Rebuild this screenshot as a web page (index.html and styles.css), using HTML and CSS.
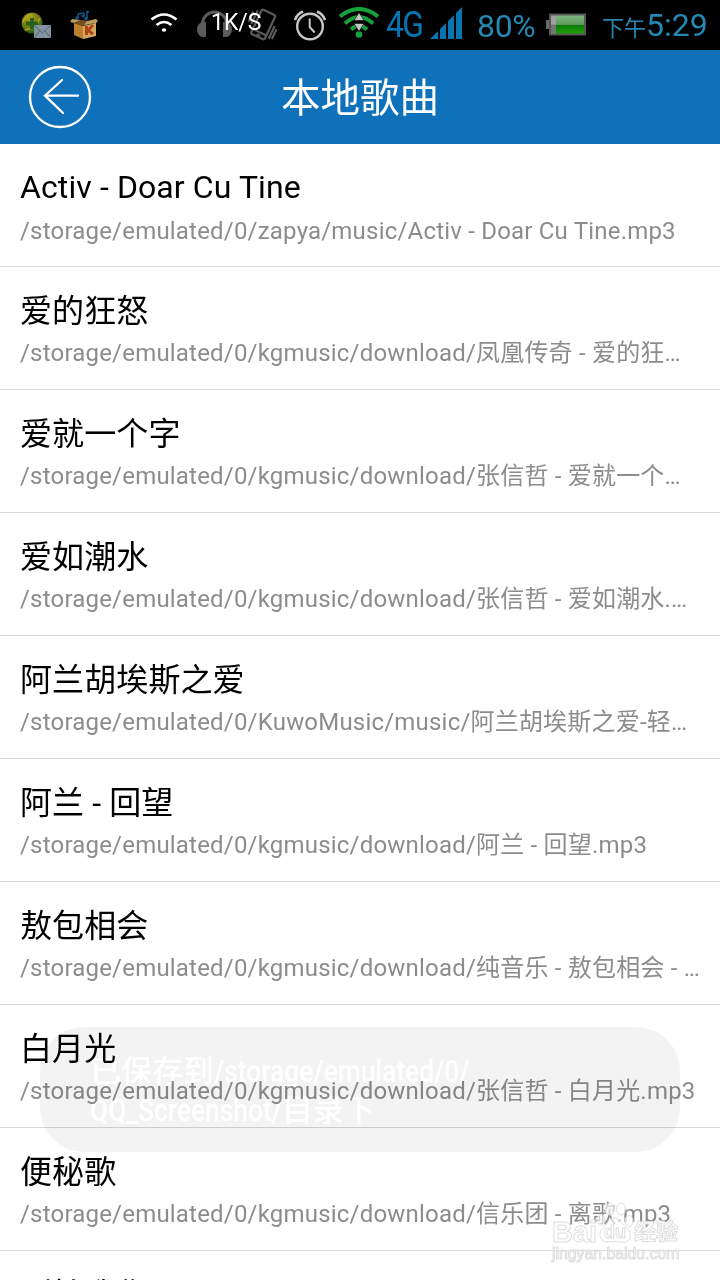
FILE: index.html
```html
<!DOCTYPE html>
<html lang="zh-CN">
<head>
  <meta charset="UTF-8" />
  <meta name="viewport" content="width=device-width, initial-scale=1" />
  <title>本地歌曲</title>
  <link rel="stylesheet" href="styles.css">
</head>
<body>
  <div class="status-bar">
    <svg class="icon-mail" width="32" height="28" viewBox="0 0 32 28">
      <defs>
        <radialGradient id="ball" cx="0.4" cy="0.3" r="0.7">
          <stop offset="0" stop-color="#b3a51c" />
          <stop offset="0.55" stop-color="#777f12" />
          <stop offset="1" stop-color="#245c12" />
        </radialGradient>
      </defs>
      <circle cx="11" cy="11" r="10.500" fill="url(#ball)" />
      <path d="M2 10c2-5 5-7 9-8M4 18c6-1 12-5 15-12" stroke="#b9a91e" stroke-width="1.500" fill="none" />
      <path d="M9 6h4v3.500h4v4h-4V17H9v-3.500H5v-4h4z" fill="#286117" />
      <path d="M13 13h17v13H13z" fill="#8493a0" />
      <path d="M13 13l8.500 8 8.500-8M13 26l6-7M30 26l-6-7" fill="none" stroke="#52606c" stroke-width="1" />
    </svg>
    <svg class="icon-box" width="30" height="30" viewBox="0 0 30 30">
      <path d="M4 13l9 3v13l-9-4z" fill="#bd812e" />
      <path d="M13 16l13-3v13l-13 3z" fill="#cfa866" />
      <path d="M4 13l8-3 14 2-13 4z" fill="#765020" />
      <path d="M4 13l-4-1 2-3 9 1zM26 13l2-2-2-2-9 2-3 4z" fill="#b99b5c" />
      <path d="M16.500 16v9M23 15l-5 5.500 5 3.500" stroke="#b34216" stroke-width="3" fill="none" />
      <path d="M8 8V4l6-1M14 3v3M17 1v7M17 1l2 1" stroke="#125784" stroke-width="1.500" fill="none" />
      <circle cx="7" cy="8" r="1.800" fill="#125784" /><circle cx="13" cy="6" r="1.600" fill="#125784" /><circle cx="16" cy="8.500" r="1.800" fill="#125784" />
    </svg>
    <svg class="icon-wifi" width="28" height="20" viewBox="0 0 28 20">
      <path d="M1.500 6.500Q14-3.500 26.500 6.500M6.500 12Q14 6 21.500 12" fill="none" stroke="#fff" stroke-width="2.600" />
      <ellipse cx="14" cy="17" rx="2.300" ry="1.800" fill="#fff" />
    </svg>
    <div class="speed">
      <svg width="80" height="34" viewBox="0 0 80 34">
        <path d="M5.500 19v-3a12 12 0 0 1 24 0v3" fill="none" stroke="#5b5b5b" stroke-width="3" />
        <path d="M9 14v15H6a6 7.500 0 0 1 0-15zM26 14v15h3a6 7.500 0 0 0 0-15z" fill="#5b5b5b" />
        <g transform="rotate(25 66 17)" fill="none" stroke="#5b5b5b" stroke-width="2.200">
          <rect x="58.500" y="3" width="15" height="27" rx="2" />
          <path d="M59 25h14M64 28h4M55 6v15M51.500 9v11M77 13v14M80 15v11" />
        </g>
      </svg>
      <span class="speed-text">1K/S</span>
    </div>
    <svg class="icon-alarm" width="32" height="32" viewBox="0 0 32 32">
      <g fill="none" stroke="#c7c7c7">
        <circle cx="16" cy="17.500" r="12.800" stroke-width="2.400" />
        <path d="M15.700 9.500V18l5 5.500" stroke-width="2" />
        <path d="M1 11Q3 5 9 2.500M31 11Q29 5 23 2.500" stroke-width="2.600" />
      </g>
    </svg>
    <svg class="icon-hotspot" width="42" height="32" viewBox="0 0 42 32">
      <g fill="none" stroke="#16a23b" stroke-width="4">
        <path d="M2 9.500Q21-5.500 40 9.500M7 16.500Q21 3.500 35 16.500M13 22.500Q21 15 29 22.500" />
      </g>
      <circle cx="21" cy="27.500" r="3.300" fill="#16a23b" />
      <path d="M16 13.500l5-8 5 8zM16 16.500h10l-5 8z" fill="#c3c3c3" stroke="#000" stroke-width="0.600" />
    </svg>
    <span class="network">4G</span>
    <svg class="icon-signal" width="33" height="32" viewBox="0 0 33 32">
      <path d="M0 32l8-8v8zM10 22l6-6v16h-6zM18 14l6-6v24h-6zM26 6l6-6v32h-6z" fill="#0675b2" />
    </svg>
    <span class="percent">80%</span>
    <svg class="icon-battery" width="40" height="23" viewBox="0 0 40 23">
      <defs>
        <linearGradient id="charge" x1="0" y1="0" x2="0" y2="1">
          <stop offset="0" stop-color="#80b884" />
          <stop offset="0.500" stop-color="#5a9a5a" />
          <stop offset="0.510" stop-color="#087708" />
          <stop offset="1" stop-color="#229f08" />
        </linearGradient>
      </defs>
      <path d="M0 7h4v9H0z" fill="#686868" />
      <path d="M3 .5h37v22H3z" fill="#565656" />
      <path d="M5 2.500h5v18H5z" fill="#a0a0a0" />
      <path d="M5 11.500h5v9H5z" fill="#777" />
      <path d="M10 2.500h28v18H10z" fill="url(#charge)" />
    </svg>
    <span class="clock"><small>下午</small>5:29</span>
  </div>

  <header class="header">
    <button class="back-btn" title="返回">
      <svg width="64" height="64" viewBox="0 0 64 64">
        <g fill="none" stroke="#fff" stroke-width="2.300">
          <circle cx="32" cy="32" r="30" />
          <path d="M50 30.700H17M34 15L17 30.700 35 48" stroke-linecap="round" />
        </g>
      </svg>
    </button>
    <h1>本地歌曲</h1>
  </header>

  <div class="song-list" id="songList">
    <!-- Rows inserted here -->
  </div>

  <div class="toast">
    <p>已保存到<span class="narrow">/storage/emulated/0/</span></p>
    <p><span class="narrow name">QQ_Screenshot/</span>目录下</p>
  </div>

  <div class="watermark">
    <div class="brand">
      <span class="bai">Bai</span>
      <span class="paw">
        <svg width="38" height="42" viewBox="0 0 38 42">
          <g fill="#fff" fill-opacity="0.6" stroke="#dedede" stroke-width="1">
            <ellipse cx="5" cy="18" rx="4" ry="5.500" />
            <ellipse cx="14" cy="7" rx="4.500" ry="6" />
            <ellipse cx="25" cy="7" rx="4.500" ry="6" />
            <ellipse cx="33" cy="19" rx="4" ry="5.500" />
            <path d="M18 16c-5 0-6 6-11 10-5 4-4 14 4 14 4 0 10-1 14 0 9 2 12-8 7-13-5-4-8-11-14-11z" />
          </g>
        </svg>
        <span class="du">du</span>
      </span>
      <span class="jingyan">经验</span>
    </div>
    <div class="site">jingyan.baidu.com</div>
  </div>

  <script src="script.js"></script>
</body>
</html>
```

FILE: styles.css
```css
html, body {
  margin: 0; padding: 0; height: 100%; overflow: hidden;
  font-family: Roboto, "Noto Sans CJK SC", sans-serif;
  background: #fff; color: #000;
}
body { position: relative; display: flex; flex-direction: column; }
svg { display: block; flex: none; }

/* Status bar */
.status-bar {
  display: flex; align-items: flex-start; flex: none;
  height: 50px; background: #000; overflow: hidden;
  white-space: nowrap;
}
.icon-mail { margin: 12px 0 0 21px; }
.icon-box { margin: 10px 0 0 17px; }
.icon-wifi { margin: 13px 0 0 50px; }
.speed { position: relative; margin: 8px 0 0 19px; width: 80px; }
.speed-text {
  position: absolute; left: 14px; top: 1px;
  font-size: 23px; line-height: 28px; color: #fff;
}
.icon-alarm { margin: 9px 0 0 17px; }
.icon-hotspot { margin: 7px 0 0 12px; }
.network {
  width: 37px; margin: 3px 0 0 6px;
  font-size: 37px; line-height: 44px; color: #0675b2; letter-spacing: -2px;
  transform: scaleX(0.86); transform-origin: left;
}
.icon-signal { margin: 7px 0 0 7px; }
.percent {
  width: 60px; margin: 5px 0 0 14px;
  font-size: 32px; line-height: 42px; color: #2588b3;
  letter-spacing: -0.3px;
}
.icon-battery { margin: 13px 0 0 9px; }
.clock {
  margin: 5px 0 0 16px;
  font-size: 32px; line-height: 40px; color: #2588b3;
}
.clock small { font-size: 22px; }

/* Title bar */
.header {
  display: grid; grid-template-columns: 120px 1fr 120px; align-items: center;
  flex: none; height: 94px; background: #0e71ba; color: #fff;
}
.back-btn {
  width: 64px; height: 64px; margin-left: 28px; padding: 0;
  background: none; border: none; cursor: pointer;
}
.header h1 {
  margin: 0; padding-top: 4px; text-align: center;
  font-size: 39.500px; font-weight: 400; line-height: 60px;
}

/* Songs */
.song-list { flex: 1; min-height: 0; overflow: hidden; }
.song {
  box-sizing: border-box; height: 123px; padding: 23px 20px 0;
  border-bottom: 1px solid #d9d9d9;
}
.song h2 {
  margin: 0; font-size: 32px; font-weight: 400; line-height: 42px;
  letter-spacing: 0.1px; white-space: nowrap;
}
.song p {
  margin: 3px 0 0; font-size: 24px; line-height: 36px; color: #8c8c8c;
  letter-spacing: 0.2px; white-space: nowrap;
}
.song:first-child { padding-top: 22px; }
.song:first-child p { margin-top: 5px; }

/* Toast, half faded out */
.toast {
  position: absolute; left: 40px; top: 1027px;
  box-sizing: border-box; width: 640px; height: 125px;
  padding: 25px 50px; border-radius: 44px;
  background: #f3f3f3; mix-blend-mode: multiply;
}
.toast p {
  margin: 0; font-size: 31px; line-height: 39px; color: #fff;
  font-weight: 500; white-space: nowrap;
}
.narrow {
  display: inline-block; width: 260px;
  transform: scaleX(0.85); transform-origin: left;
}
.narrow.name { width: 192px; }

.watermark {
  position: absolute; left: 552px; top: 1202px; width: 130px;
  font-family: "Liberation Sans", "Noto Sans CJK SC", sans-serif;
  color: #fff; -webkit-text-stroke: 1px #dedede;
}
.brand { display: flex; height: 43px; align-items: flex-end; font-weight: 700; }
.bai { width: 44px; font-size: 29px; line-height: 26px; }
.paw { position: relative; width: 38px; height: 43px; }
.du {
  position: absolute; left: 8px; top: 20px;
  font-size: 18px; line-height: 20px;
}
.jingyan { font-size: 22px; line-height: 26px; }
.site { font-size: 15.800px; line-height: 18px; }
```

FILE: script.js
```js
const songList = document.getElementById('songList');

const songs = [
  { title: 'Activ - Doar Cu Tine', path: '/storage/emulated/0/zapya/music/Activ - Doar Cu Tine.mp3' },
  { title: '爱的狂怒', path: '/storage/emulated/0/kgmusic/download/凤凰传奇 - 爱的狂…' },
  { title: '爱就一个字', path: '/storage/emulated/0/kgmusic/download/张信哲 - 爱就一个…' },
  { title: '爱如潮水', path: '/storage/emulated/0/kgmusic/download/张信哲 - 爱如潮水.…' },
  { title: '阿兰胡埃斯之爱', path: '/storage/emulated/0/KuwoMusic/music/阿兰胡埃斯之爱-轻…' },
  { title: '阿兰 - 回望', path: '/storage/emulated/0/kgmusic/download/阿兰 - 回望.mp3' },
  { title: '敖包相会', path: '/storage/emulated/0/kgmusic/download/纯音乐 - 敖包相会 - …' },
  { title: '白月光', path: '/storage/emulated/0/kgmusic/download/张信哲 - 白月光.mp3' },
  { title: '便秘歌', path: '/storage/emulated/0/kgmusic/download/信乐团 - 离歌.mp3' },
  { title: '别怕我伤心', path: '' }
];

// Render one row per song
songs.forEach(song => {
  const row = document.createElement('div');
  row.className = 'song';
  row.innerHTML = `<h2>${song.title}</h2><p>${song.path}</p>`;
  songList.appendChild(row);
});
```
